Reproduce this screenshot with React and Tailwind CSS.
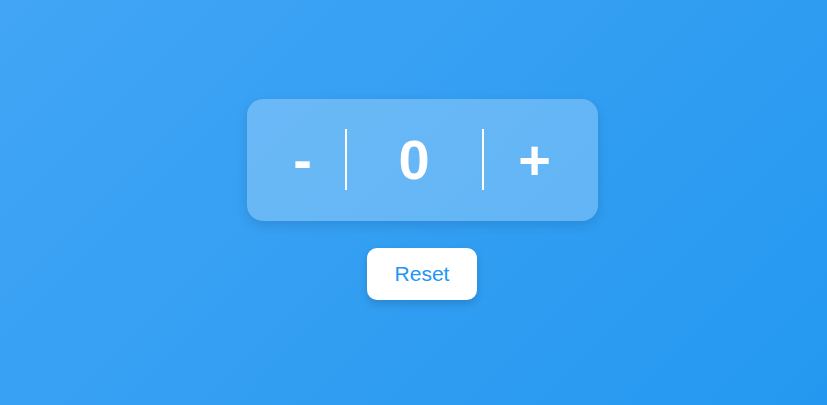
import React, { useState } from "react";

function App() {
  const [count, setCount] = useState(0);

  return (
    <div
      className="min-h-screen w-full flex flex-col items-center justify-center pl-[17px] pb-[7px] bg-[linear-gradient(135deg,#42a5f5,#2498f0)]"
      style={{ fontFamily: '"Liberation Sans", Arial, sans-serif' }}
    >
      {/* Counter card */}
      <div className="w-[351px] h-[122px] rounded-2xl bg-white/25 shadow-[0_4px_12px_rgba(0,0,0,0.12)] flex items-center pl-[32px] text-white font-bold text-[56px] leading-none">
        <button
          onClick={() => setCount(count - 1)}
          className="w-[48px] flex justify-center"
        >
          -
        </button>
        <div className="w-[2px] h-[61px] bg-white ml-[18px]"></div>
        <span className="w-[135px] flex justify-center">{count}</span>
        <div className="w-[2px] h-[61px] bg-white"></div>
        <button
          onClick={() => setCount(count + 1)}
          className="w-[66px] ml-[18px] flex justify-center"
        >
          +
        </button>
      </div>

      {/* Reset */}
      <button
        onClick={() => setCount(0)}
        className="mt-[27px] h-[52px] px-[28px] rounded-[10px] bg-white text-[#2196f3] text-[21px] shadow-[0_4px_8px_rgba(0,0,0,0.15)]"
      >
        Reset
      </button>
    </div>
  );
}

export default App;
